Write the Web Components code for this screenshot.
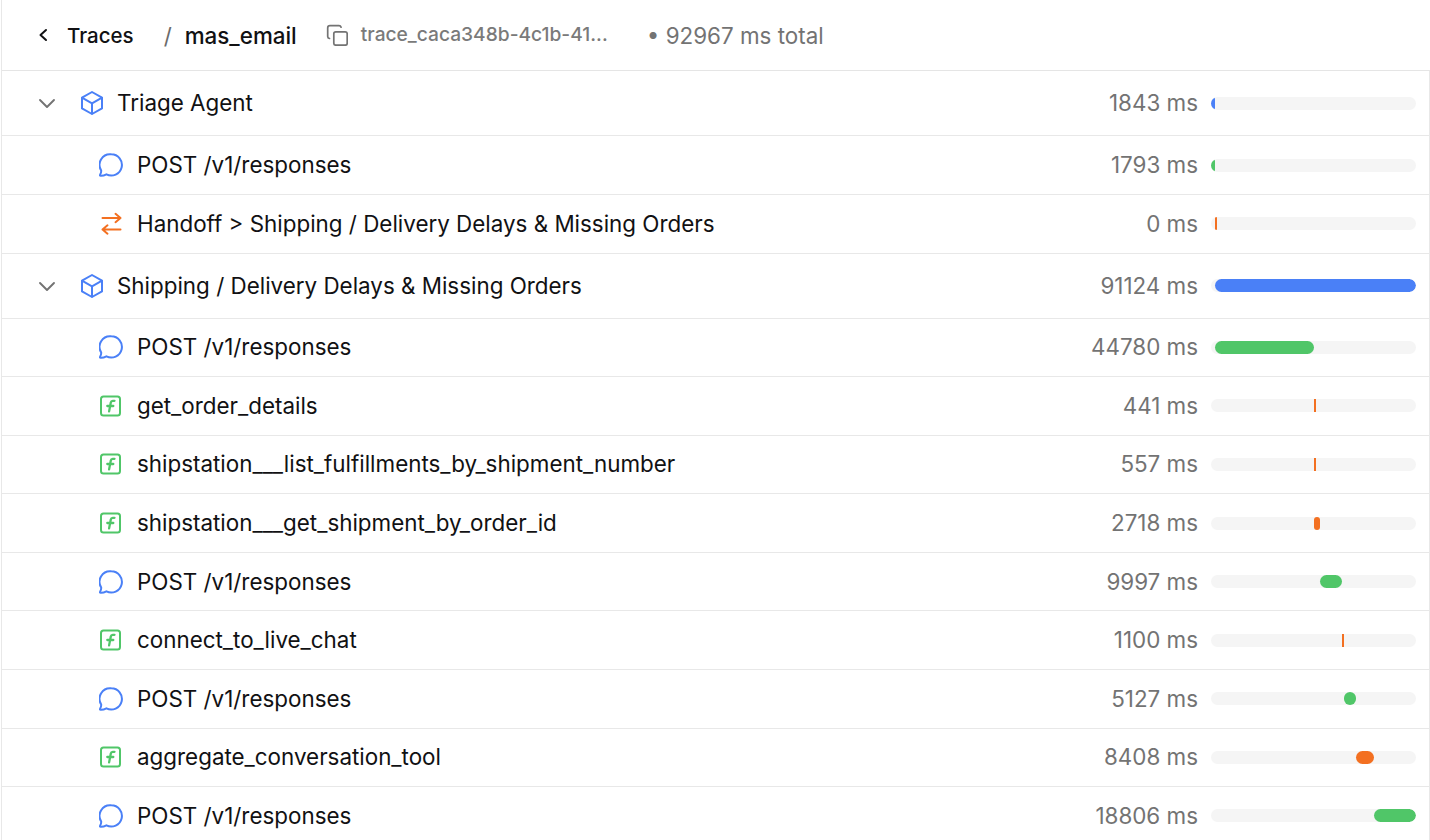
<!DOCTYPE html>
<html lang="en"><head><meta charset="utf-8"><title>Trace</title>
<style>
html,body{margin:0;height:100%;background:#fff;overflow:hidden}
body{font-family:Inter,"Liberation Sans",sans-serif;color:#111113}
</style></head><body>
<trace-view>
  <trace-header slot="header" name="mas_email" trace="trace_caca348b-4c1b-41..." total="92967 ms total"></trace-header>
  <trace-row kind="agent" ms="1843" color="blue" left="0" width="4">Triage Agent</trace-row>
  <trace-row kind="chat" ms="1793" color="green" left="0" width="4">POST /v1/responses</trace-row>
  <trace-row kind="handoff" ms="0" color="orange" left="4" width="2" square>Handoff &gt; Shipping / Delivery Delays &amp; Missing Orders</trace-row>
  <trace-row kind="agent" ms="91124" color="blue" left="4" width="201">Shipping / Delivery Delays &amp; Missing Orders</trace-row>
  <trace-row kind="chat" ms="44780" color="green" left="4" width="99">POST /v1/responses</trace-row>
  <trace-row kind="fn" ms="441" color="orange" left="103" width="2" square>get_order_details</trace-row>
  <trace-row kind="fn" ms="557" color="orange" left="103" width="2" square>shipstation___list_fulfillments_by_shipment_number</trace-row>
  <trace-row kind="fn" ms="2718" color="orange" left="103" width="6">shipstation___get_shipment_by_order_id</trace-row>
  <trace-row kind="chat" ms="9997" color="green" left="109" width="22">POST /v1/responses</trace-row>
  <trace-row kind="fn" ms="1100" color="orange" left="131" width="2" square>connect_to_live_chat</trace-row>
  <trace-row kind="chat" ms="5127" color="green" left="133" width="12">POST /v1/responses</trace-row>
  <trace-row kind="fn" ms="8408" color="orange" left="145" width="18">aggregate_conversation_tool</trace-row>
  <trace-row kind="chat" ms="18806" color="green" left="163" width="42">POST /v1/responses</trace-row>
</trace-view>
<template id="view-t">
  <style>
    :host{display:block;box-sizing:border-box;height:840px;overflow:hidden;margin-left:1px;border-left:1px solid #e8e8e8}
    .list{display:flex;flex-direction:column;border-right:1px solid #e8e8e8;border-top:1px solid #e5e5e5}
  </style>
  <slot name="header"></slot>
  <div class="list"><slot></slot></div>
</template>
<template id="header-t">
  <style>
    :host{display:flex;align-items:center;box-sizing:border-box;height:70.4px;padding-left:34px;font-size:22.4px;color:#111113;white-space:nowrap}
    svg{display:block;fill:none;stroke:currentColor;stroke-linecap:round;stroke-linejoin:round}
    .back{width:14px;height:14px;stroke-width:2;margin-right:17px}
    .crumb{font-weight:500}
    .trail{font-size:20.5px}
    .sep{color:#6b6b6b;margin:0 13px 0 30px;font-weight:400}
    .copy{width:22px;height:22px;margin-left:29px;color:#737373;stroke-width:1.7}
    .id{font-size:19.2px;font-weight:500;color:#7a7a7a;margin-left:13px;width:286px;padding-bottom:2px}
    .total{color:#737373}
  </style>
  <svg class="back" viewBox="0 0 14 14"><path d="M10 2 4.500 7l5.500 5"/></svg>
  <span class="crumb trail">Traces</span>
  <span class="sep">/</span>
  <span class="crumb" id="name"></span>
  <svg class="copy" viewBox="0 0 22 22"><rect x="7.800" y="7.800" width="13.400" height="13.400" rx="2"/><path d="M3.500 14.500c-1.200-.3-1.800-1.100-1.800-2.100V4c0-1.300 1-2.300 2.300-2.300h9c1 0 1.800.6 2.100 1.500"/></svg>
  <span class="id" id="trace"></span>
  <span class="total">• <span id="total"></span></span>
</template>
<template id="row-t">
  <style>
    :host{display:flex;align-items:center;box-sizing:border-box;height:58.58px;border-bottom:1px solid #e8e8e8;padding:0 13px 0 97px;font-size:22.4px;color:#111113;white-space:nowrap}
    :host([kind=agent]){height:65px;padding-left:33px}
    svg{display:block;fill:none;stroke-linecap:round;stroke-linejoin:round}
    .chev{width:24px;height:24px;stroke:#737373;stroke-width:1.9;margin-right:21px;display:none}
    :host([kind=agent]) .chev{display:block}
    .icon{width:24px;height:24px;flex:none;margin-right:14px}
    :host([kind=agent]) .icon{margin-right:13px}
    .label{flex:1;min-width:0;padding-bottom:1px}
    .ms{color:#737373;margin-right:13px;padding-bottom:1px}
    .track{position:relative;flex:none;width:205px;height:13px;border-radius:7px;overflow:hidden;background-color:#f5f5f5;background-image:radial-gradient(#ececec .5px,transparent .6px);background-size:4px 4px}
    .bar{position:absolute;top:0;bottom:0;border-radius:7px}
    :host([square]) .bar{border-radius:0}
  </style>
  <svg class="chev" viewBox="0 0 24 24"><path d="m5 9 7 7 7-7"/></svg>
  <span id="ic"></span>
  <span class="label"><slot></slot></span>
  <span class="ms" id="ms"></span>
  <span class="track"><span class="bar" id="bar"></span></span>
</template>
<script>
const ICONS={
 agent:'<svg class="icon" viewBox="0 0 24 24" stroke="#4a80f7" stroke-width="2"><path d="M12 1 22 6.600v10.800L12 23 2 17.400V6.600z"/><path d="M2.400 6.900 12 12.300 21.600 6.900M12 12.300V22.500"/></svg>',
 chat:'<svg class="icon" viewBox="0 0 24 24" stroke="#4a80f7" stroke-width="2"><path d="M12.300 1.300a10.600 10.600 0 1 1-4.900 20c-1.900 1-4 1.500-5.900 1.400-.5 0-.8-.5-.5-.9.900-1.300 1.300-2.800 1.200-4.300A10.600 10.600 0 0 1 12.300 1.300z"/></svg>',
 handoff:'<svg class="icon" viewBox="0 0 24 24" stroke="#f37021" stroke-width="2"><path d="M3.500 6H21.500M16.500 1.800 21.500 6l-5 4.200M21.500 17.500H3.500M8.500 13.300 3.500 17.500l5 4.200"/></svg>',
 fn:'<svg class="icon" viewBox="0 0 24 24" stroke="#50c668" stroke-width="2"><rect x="2" y="2.500" width="19" height="19" rx="2.500"/><path stroke-width="2.300" d="M15.500 6.800h-1.800c-1 0-1.700.6-1.900 1.600l-1.700 9M8.300 12h6"/></svg>'
};
const COLORS={blue:'#4a80f7',green:'#50c668',orange:'#f37021'};
function shadow(el,id){el.attachShadow({mode:'open'}).appendChild(document.getElementById(id).content.cloneNode(true));return el.shadowRoot}
customElements.define('trace-view',class extends HTMLElement{constructor(){super();shadow(this,'view-t')}});
customElements.define('trace-header',class extends HTMLElement{connectedCallback(){const r=this.shadowRoot||shadow(this,'header-t');
 r.getElementById('name').textContent=this.getAttribute('name');
 r.getElementById('trace').textContent=this.getAttribute('trace');
 r.getElementById('total').textContent=this.getAttribute('total')}});
customElements.define('trace-row',class extends HTMLElement{connectedCallback(){const r=this.shadowRoot||shadow(this,'row-t');
 r.getElementById('ic').innerHTML=ICONS[this.getAttribute('kind')];
 r.getElementById('ms').textContent=this.getAttribute('ms')+' ms';
 const b=r.getElementById('bar');b.style.left=this.getAttribute('left')+'px';b.style.width=this.getAttribute('width')+'px';b.style.background=COLORS[this.getAttribute('color')]}});
</script>
</body></html>
